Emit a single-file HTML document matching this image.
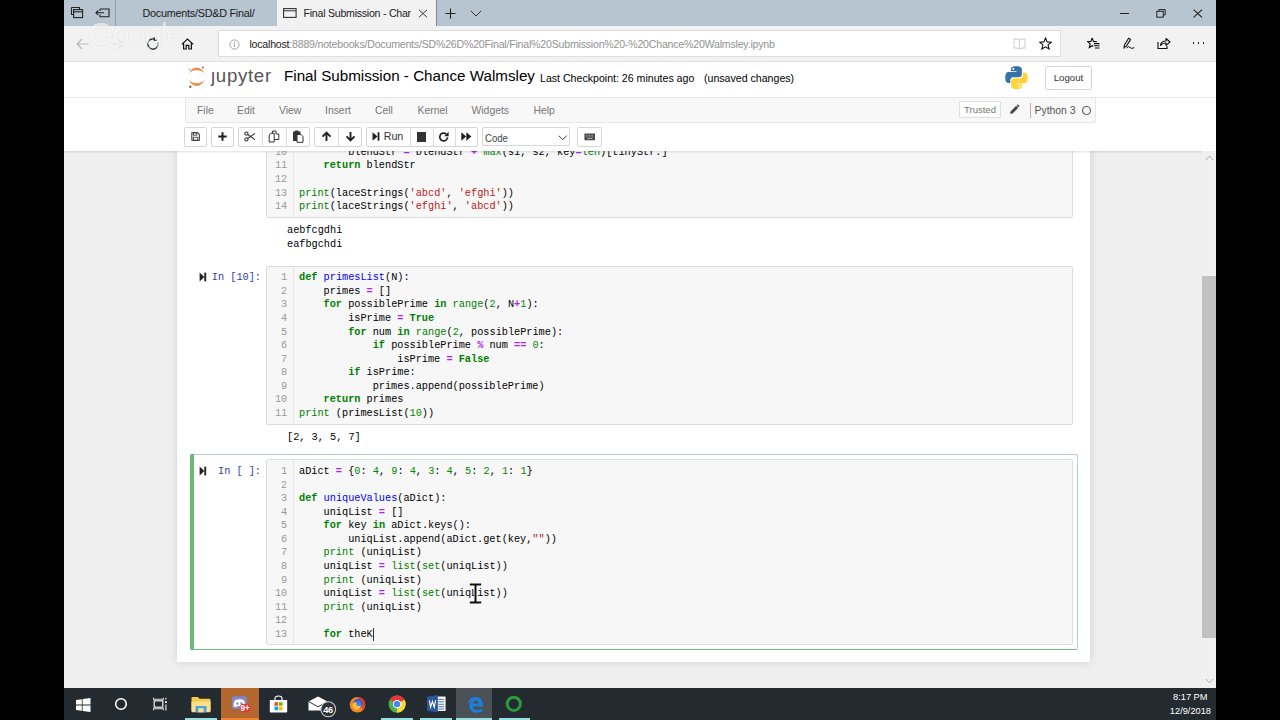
<!DOCTYPE html>
<html lang="en">
<head>
<meta charset="utf-8">
<title>Final Submission - Chance Walmsley</title>
<style>
*{box-sizing:border-box;margin:0;padding:0}
html,body{width:1280px;height:720px;overflow:hidden;background:#000}
body{font-family:"Liberation Sans",sans-serif;position:relative;color:#000}
.abs{position:absolute}
#screen{position:absolute;left:64px;top:0;width:1152px;height:720px;overflow:hidden;background:#eeeeee}
/* all children of #screen positioned in page coords by shifting -64 */
#in{position:absolute;left:-64px;top:0;width:1280px;height:720px}
#tabbar{left:64px;top:0;width:1152px;height:25.500px;background:#b7c5d0}
#addr{left:64px;top:25.500px;width:1152px;height:36.500px;background:#f2f2f2;border-bottom:1px solid #e0e0e0}
#urlbox{left:218px;top:30px;width:843.400px;height:26.600px;background:#fff;border:1px solid #dedede}
.tabtxt{font-size:10.6px;color:#1a1a1a;white-space:nowrap;line-height:12px}
#jhead{left:64px;top:62px;width:1152px;height:89px;background:#fff;box-shadow:0 1px 2px rgba(0,0,0,.12)}
#nbbg{left:64px;top:151px;width:1138px;height:537px;background:#efefef}
#nb{left:177px;top:140px;width:913px;height:522px;background:#fff;box-shadow:0 0 8px 0 rgba(87,87,87,.2)}
.menubar{left:185px;top:97px;width:911px;height:26px;background:#f8f8f8;border:1px solid #e7e7e7;border-radius:2px}
.mi{position:absolute;top:104.600px;font-size:10.4px;color:#777;line-height:12px;white-space:nowrap}
.btn{position:absolute;top:127px;height:20px;background:#fff;border:1px solid #d6d6d6;border-radius:2px}
.code{font-family:"Liberation Mono",monospace;font-size:10.25px;line-height:13.6px;white-space:pre;color:#000;letter-spacing:-0.01px}
.inarea{position:absolute;background:#f7f7f7;border:1px solid #dcdcdc;border-radius:2px;overflow:hidden}
.gut{position:absolute;left:0;top:0;bottom:0;width:27px;border-right:1px solid #e6e6e6;background:#f7f7f7}
.ln{position:absolute;left:0;width:20.200px;text-align:right;color:#999}
.cl{position:absolute;left:32px}
.k{color:#008000;font-weight:bold}
.b{color:#008000}
.n{color:#008800}
.f{color:#0000ff}
.o{color:#aa22ff;font-weight:bold}
.s{color:#ba2121}
.prompt{position:absolute;color:#303f9f;text-align:right}
#taskbar{left:64px;top:688px;width:1152px;height:32px;background:#232a30}
</style>
</head>
<body>
<div id="screen"><div id="in">

<!-- NOTEBOOK AREA -->
<div class="abs" id="nbbg"></div>
<div class="abs" id="nb"></div>
<!--CELLS-START-->
<div class="inarea code" style="left:266px;top:130px;width:807px;height:87.5px">
<div class="gut"></div>
<div class="ln" style="top:14.90px">10</div><div class="cl" style="top:14.90px">        blendStr <span class="o">=</span> blendStr <span class="o">+</span> <span class="b">max</span>(s1, s2, key<span class="o">=</span><span class="b">len</span>)[tinyStr:]</div>
<div class="ln" style="top:28.48px">11</div><div class="cl" style="top:28.48px">    <span class="k">return</span> blendStr</div>
<div class="ln" style="top:42.06px">12</div><div class="cl" style="top:42.06px"></div>
<div class="ln" style="top:55.64px">13</div><div class="cl" style="top:55.64px"><span class="b">print</span>(laceStrings(<span class="s">'abcd'</span>, <span class="s">'efghi'</span>))</div>
<div class="ln" style="top:69.22px">14</div><div class="cl" style="top:69.22px"><span class="b">print</span>(laceStrings(<span class="s">'efghi'</span>, <span class="s">'abcd'</span>))</div>

</div>
<div class="code abs" style="left:287px;top:224.3px">aebfcgdhi
eafbgchdi</div>
<div class="prompt code" style="left:190px;top:271.2px;width:71px">In [10]:</div>
<div class="inarea code" style="left:266px;top:265.5px;width:807px;height:159.5px">
<div class="gut"></div>
<div class="ln" style="top:4.70px">1</div><div class="cl" style="top:4.70px"><span class="k">def</span> <span class="f">primesList</span>(N):</div>
<div class="ln" style="top:18.28px">2</div><div class="cl" style="top:18.28px">    primes <span class="o">=</span> []</div>
<div class="ln" style="top:31.86px">3</div><div class="cl" style="top:31.86px">    <span class="k">for</span> possiblePrime <span class="k">in</span> <span class="b">range</span>(<span class="n">2</span>, N<span class="o">+</span><span class="n">1</span>):</div>
<div class="ln" style="top:45.44px">4</div><div class="cl" style="top:45.44px">        isPrime <span class="o">=</span> <span class="k">True</span></div>
<div class="ln" style="top:59.02px">5</div><div class="cl" style="top:59.02px">        <span class="k">for</span> num <span class="k">in</span> <span class="b">range</span>(<span class="n">2</span>, possiblePrime):</div>
<div class="ln" style="top:72.60px">6</div><div class="cl" style="top:72.60px">            <span class="k">if</span> possiblePrime <span class="o">%</span> num <span class="o">==</span> <span class="n">0</span>:</div>
<div class="ln" style="top:86.18px">7</div><div class="cl" style="top:86.18px">                isPrime <span class="o">=</span> <span class="k">False</span></div>
<div class="ln" style="top:99.76px">8</div><div class="cl" style="top:99.76px">        <span class="k">if</span> isPrime:</div>
<div class="ln" style="top:113.34px">9</div><div class="cl" style="top:113.34px">            primes.append(possiblePrime)</div>
<div class="ln" style="top:126.92px">10</div><div class="cl" style="top:126.92px">    <span class="k">return</span> primes</div>
<div class="ln" style="top:140.50px">11</div><div class="cl" style="top:140.50px"><span class="b">print</span> (primesList(<span class="n">10</span>))</div>

</div>
<div class="code abs" style="left:287px;top:430.7px">[2, 3, 5, 7]</div>
<div class="abs" style="left:190px;top:454px;width:888px;height:196px;border:1px solid #b3d6b8;border-bottom-color:#74bb80;border-radius:2px;background:#fff"></div><div class="abs" style="left:190px;top:454px;width:4px;height:196px;background:#69b977;border-radius:2px 0 0 2px"></div>
<div class="prompt code" style="left:190px;top:465.0px;width:71px">In [ ]:</div>
<div class="inarea code" style="left:266px;top:458.5px;width:807px;height:186.5px">
<div class="gut"></div>
<div class="ln" style="top:5.50px">1</div><div class="cl" style="top:5.50px">aDict <span class="o">=</span> {<span class="n">0</span>: <span class="n">4</span>, <span class="n">9</span>: <span class="n">4</span>, <span class="n">3</span>: <span class="n">4</span>, <span class="n">5</span>: <span class="n">2</span>, <span class="n">1</span>: <span class="n">1</span>}</div>
<div class="ln" style="top:19.08px">2</div><div class="cl" style="top:19.08px"></div>
<div class="ln" style="top:32.66px">3</div><div class="cl" style="top:32.66px"><span class="k">def</span> <span class="f">uniqueValues</span>(aDict):</div>
<div class="ln" style="top:46.24px">4</div><div class="cl" style="top:46.24px">    uniqList <span class="o">=</span> []</div>
<div class="ln" style="top:59.82px">5</div><div class="cl" style="top:59.82px">    <span class="k">for</span> key <span class="k">in</span> aDict.keys():</div>
<div class="ln" style="top:73.40px">6</div><div class="cl" style="top:73.40px">        uniqList.append(aDict.get(key,<span class="s">""</span>))</div>
<div class="ln" style="top:86.98px">7</div><div class="cl" style="top:86.98px">    <span class="b">print</span> (uniqList)</div>
<div class="ln" style="top:100.56px">8</div><div class="cl" style="top:100.56px">    uniqList <span class="o">=</span> <span class="b">list</span>(<span class="b">set</span>(uniqList))</div>
<div class="ln" style="top:114.14px">9</div><div class="cl" style="top:114.14px">    <span class="b">print</span> (uniqList)</div>
<div class="ln" style="top:127.72px">10</div><div class="cl" style="top:127.72px">    uniqList <span class="o">=</span> <span class="b">list</span>(<span class="b">set</span>(uniqList))</div>
<div class="ln" style="top:141.30px">11</div><div class="cl" style="top:141.30px">    <span class="b">print</span> (uniqList)</div>
<div class="ln" style="top:154.88px">12</div><div class="cl" style="top:154.88px"></div>
<div class="ln" style="top:168.46px">13</div><div class="cl" style="top:168.46px">    <span class="k">for</span> theK</div>
<div style="position:absolute;left:105.9px;top:168.46px;width:1px;height:13px;background:#333"></div>
</div>
<svg class="abs" style="left:199px;top:271.800px" width="8" height="10" viewBox="0 0 8 10"><path d="M.6 .6 L5.400 5 L.6 9.400 Z" fill="#222"/><rect x="5.300" y=".6" width="1.900" height="8.800" fill="#222"/></svg>
<svg class="abs" style="left:199px;top:465.500px" width="8" height="10" viewBox="0 0 8 10"><path d="M.6 .6 L5.400 5 L.6 9.400 Z" fill="#222"/><rect x="5.300" y=".6" width="1.900" height="8.800" fill="#222"/></svg>
<svg class="abs" style="left:469px;top:582.500px" width="13" height="21" viewBox="0 0 13 21"><path d="M.8 1.500 H5.200 Q6.500 1.500 6.500 2.500 Q6.500 1.500 7.800 1.500 H12.200 M.8 19.500 H5.200 Q6.500 19.500 6.500 18.500 Q6.500 19.500 7.800 19.500 H12.200 M6.500 2 V19" fill="none" stroke="#fff" stroke-width="3.200" stroke-opacity=".85"/><path d="M.8 1.500 H12.200 M.8 19.500 H12.200 M6.500 1.500 V19.500" fill="none" stroke="#111" stroke-width="2"/></svg>
<!--CELLS-END-->

<!-- JUPYTER HEADER -->
<div class="abs" id="jhead"></div>
<!--HEADER-START-->
<!-- jupyter logo -->
<svg class="abs" style="left:186px;top:64px" width="22" height="27" viewBox="0 0 22 27">
  <path d="M3.000 9.000 C4.800 5.000 7.800 3.700 10.600 3.700 C13.400 3.700 16.400 5.000 18.200 9.000 C16.000 6.900 13.500 6.300 10.600 6.300 C7.700 6.300 5.200 6.900 3.000 9.000 Z" fill="#ee8a4a"/>
  <path d="M3.000 16.000 C4.800 20.300 7.800 21.900 10.600 21.900 C13.400 21.900 16.400 20.300 18.200 16.000 C16.000 18.400 13.500 19.200 10.600 19.200 C7.700 19.200 5.200 18.400 3.000 16.000 Z" fill="#ee8a4a"/>
  <circle cx="16.900" cy="3.400" r="1.000" fill="#767677"/>
  <circle cx="3.100" cy="5.300" r="0.700" fill="#989798"/>
  <circle cx="4.300" cy="22.800" r="1.200" fill="#6f7070"/>
</svg>
<div class="abs" style="left:211px;top:64.1px;font-size:18.7px;line-height:24px;color:#555;letter-spacing:.68px;white-space:nowrap">ȷupyter</div>
<div class="abs" style="left:284px;top:65.4px;font-size:15.2px;line-height:22px;color:#000;white-space:nowrap">Final Submission - Chance Walmsley</div>
<div class="abs" style="left:540px;top:71.3px;font-size:10.6px;line-height:14px;color:#000;white-space:nowrap">Last Checkpoint: 26 minutes ago</div>
<div class="abs" style="left:704px;top:71.3px;font-size:10.6px;line-height:14px;color:#000;white-space:nowrap">(unsaved changes)</div>
<!-- python logo -->
<svg class="abs" style="left:1004.5px;top:65.5px" width="23" height="23.5" viewBox="0 0 110 112">
  <path d="M54.3 1C27 1 28.7 12.9 28.7 12.9l.03 12.3h26.1v3.7H18.4S1 26.9 1 54.6c0 27.700 15.200 26.700 15.200 26.700h9.100V68.500s-.5-15.200 15-15.200h25.800s14.500.2 14.500-14V15.700S82.800 1 54.300 1zM39.900 9.300c2.600 0 4.700 2.100 4.700 4.700s-2.100 4.700-4.700 4.700-4.700-2.100-4.700-4.700 2.100-4.700 4.700-4.700z" fill="#3572a5"/>
  <path d="M55.700 111c27.300 0 25.600-11.900 25.600-11.900l-.03-12.300H55.200v-3.700h36.400S109 85.100 109 57.400c0-27.700-15.200-26.700-15.200-26.700h-9.100v12.800s.5 15.200-15 15.200H43.900s-14.500-.2-14.500 14v23.600S27.200 111 55.700 111zm14.400-8.300c-2.600 0-4.700-2.100-4.700-4.700s2.100-4.700 4.700-4.700 4.700 2.100 4.700 4.700-2.100 4.700-4.700 4.700z" fill="#ffd43b"/>
</svg>
<div class="abs" style="left:1045px;top:65.5px;width:47px;height:24px;border:1px solid #d6d6d6;border-radius:2px;background:#fff;font-size:9.700px;line-height:22.500px;text-align:center;color:#333">Logout</div>
<!-- header bar line -->
<div class="abs" style="left:64px;top:97px;width:1152px;height:1px;background:#ebebeb"></div>
<!-- menubar -->
<div class="abs menubar"></div>
<div class="mi" style="left:197px">File</div>
<div class="mi" style="left:237px">Edit</div>
<div class="mi" style="left:279px">View</div>
<div class="mi" style="left:325px">Insert</div>
<div class="mi" style="left:375px">Cell</div>
<div class="mi" style="left:417.5px">Kernel</div>
<div class="mi" style="left:471.5px">Widgets</div>
<div class="mi" style="left:533.5px">Help</div>
<div class="abs" style="left:959px;top:101px;width:42px;height:17px;border:1px solid #e0e0e0;background:#fff;border-radius:1px;font-size:9.500px;line-height:15.500px;text-align:center;color:#777">Trusted</div>
<svg class="abs" style="left:1009px;top:104px" width="11" height="11" viewBox="0 0 11 11"><path d="M1.2 9.8 L1.6 7.4 L7.2 1.8 L9.2 3.8 L3.6 9.4 Z M7.8 1.2 L8.4 .6 Q8.9 .3 9.4 .8 L10.2 1.6 Q10.6 2.1 10.2 2.6 L9.700 3.200 Z" fill="#444"/></svg>
<div class="abs" style="left:1029.500px;top:103px;width:1px;height:14.500px;background:#b0b0b0"></div>
<div class="abs" style="left:1034.5px;top:105px;font-size:10.4px;line-height:12px;color:#555;white-space:nowrap">Python 3</div>
<svg class="abs" style="left:1081px;top:104.700px" width="11" height="11" viewBox="0 0 11 11"><circle cx="5.500" cy="5.500" r="4" fill="none" stroke="#666" stroke-width="1.200"/></svg>
<!-- toolbar -->
<div class="btn" style="left:184px;width:23px"></div>
<div class="btn" style="left:211px;width:23px"></div>
<div class="btn" style="left:238px;width:72px"></div>
<div class="abs" style="left:261.500px;top:128px;width:1px;height:18px;background:#ddd"></div>
<div class="abs" style="left:285.500px;top:128px;width:1px;height:18px;background:#ddd"></div>
<div class="btn" style="left:314px;width:48px"></div>
<div class="abs" style="left:337.500px;top:128px;width:1px;height:18px;background:#ddd"></div>
<div class="btn" style="left:366px;width:112px"></div>
<div class="abs" style="left:409.500px;top:128px;width:1px;height:18px;background:#ddd"></div>
<div class="abs" style="left:432.500px;top:128px;width:1px;height:18px;background:#ddd"></div>
<div class="abs" style="left:454.500px;top:128px;width:1px;height:18px;background:#ddd"></div>
<div class="btn" style="left:482px;width:88px;top:127.200px;height:18.600px"></div>
<div class="btn" style="left:577px;width:25px"></div>
<!-- toolbar icons -->
<!-- save -->
<svg class="abs" style="left:191px;top:132px" width="9.200" height="9.200" viewBox="0 0 11 11"><path d="M1 1 H8.200 L10 2.800 V10 H1 Z" fill="none" stroke="#333" stroke-width="1.200"/><rect x="2.800" y="1" width="4.200" height="2.800" fill="none" stroke="#333" stroke-width="1"/><rect x="2.800" y="6.300" width="5.400" height="3.700" fill="none" stroke="#333" stroke-width="1"/></svg>
<!-- plus -->
<svg class="abs" style="left:218px;top:132px" width="9" height="9" viewBox="0 0 9 9"><path d="M4.500 .3 V8.700 M.3 4.500 H8.700" stroke="#222" stroke-width="2" fill="none"/></svg>
<!-- cut -->
<svg class="abs" style="left:244px;top:131px" width="12" height="11" viewBox="0 0 12 11"><circle cx="2.400" cy="2.600" r="1.600" fill="none" stroke="#333" stroke-width="1.100"/><circle cx="2.400" cy="8.400" r="1.600" fill="none" stroke="#333" stroke-width="1.100"/><path d="M3.700 3.500 L11 8.600 M3.700 7.500 L11 2.400" stroke="#333" stroke-width="1.100" fill="none"/></svg>
<!-- copy -->
<svg class="abs" style="left:268px;top:130px" width="12" height="13" viewBox="0 0 12 13"><path d="M4.500 1 H8 V4 H10.800 V9.500 H4.500 Z" fill="#fff" stroke="#333" stroke-width="1"/><path d="M1.200 4.800 L3 3.200 H6.200 V12 H1.200 Z" fill="#fff" stroke="#333" stroke-width="1"/></svg>
<!-- paste -->
<svg class="abs" style="left:292px;top:130px" width="12" height="13" viewBox="0 0 12 13"><rect x="1" y="1.500" width="7.500" height="9.500" fill="#333"/><rect x="3" y=".5" width="3.500" height="2" fill="#333"/><path d="M5 4.500 H9 L11 6.500 V12.300 H5 Z" fill="#fff" stroke="#333" stroke-width="1"/></svg>
<!-- up -->
<svg class="abs" style="left:320.500px;top:131px" width="11" height="11" viewBox="0 0 11 11"><path d="M5.500 10 V2 M1.500 5.600 L5.500 1.500 L9.500 5.600" stroke="#222" stroke-width="1.900" fill="none"/></svg>
<!-- down -->
<svg class="abs" style="left:344.500px;top:131px" width="11" height="11" viewBox="0 0 11 11"><path d="M5.500 1 V9 M1.500 5.400 L5.500 9.500 L9.500 5.400" stroke="#222" stroke-width="1.900" fill="none"/></svg>
<!-- run -->
<svg class="abs" style="left:372px;top:132px" width="8" height="9" viewBox="0 0 8 9"><path d="M.5 .3 L5.500 4.500 L.5 8.700 Z" fill="#222"/><rect x="5.600" y=".3" width="1.800" height="8.400" fill="#222"/></svg>
<div class="abs" style="left:383.700px;top:130.200px;font-size:10.700px;line-height:12px;color:#333;white-space:nowrap">Run</div>
<!-- stop -->
<div class="abs" style="left:416.500px;top:132px;width:9.500px;height:9.500px;background:#333"></div>
<!-- restart -->
<svg class="abs" style="left:437.500px;top:130.500px" width="12" height="12" viewBox="0 0 12 12"><path d="M9.600 6.200 A3.900 3.900 0 1 1 8.200 3" fill="none" stroke="#222" stroke-width="1.700"/><path d="M10.600 .8 V5.200 H6.200 Z" fill="#222"/></svg>
<!-- fast forward -->
<svg class="abs" style="left:460.500px;top:132px" width="11" height="9" viewBox="0 0 11 9"><path d="M.3 .2 L5.200 4.500 L.3 8.800 Z M5.300 .2 L10.400 4.500 L5.300 8.800 Z" fill="#222"/></svg>
<!-- select -->
<div class="abs" style="left:484.800px;top:132px;font-size:11.300px;line-height:13px;color:#444;white-space:nowrap;transform:scaleX(.85);transform-origin:0 50%">Code</div>
<svg class="abs" style="left:557.500px;top:135.200px" width="9.500" height="5.700" viewBox="0 0 10 6"><path d="M.8 .8 L5 4.800 L9.200 .8" stroke="#333" stroke-width="1" fill="none"/></svg>
<!-- keyboard -->
<svg class="abs" style="left:583.700px;top:132.700px" width="11.700" height="8.100" viewBox="0 0 13 9"><rect x=".5" y=".5" width="12" height="7.600" rx="1" fill="#444"/><path d="M2 2.500 H11 M2 4.300 H11" stroke="#ddd" stroke-width=".8" stroke-dasharray="1 .8"/><path d="M3.500 6.200 H9.500" stroke="#ddd" stroke-width=".8"/></svg>

<!--HEADER-END-->

<!-- BROWSER CHROME -->
<div class="abs" id="tabbar"></div>
<div class="abs" id="addr"></div>
<div class="abs" id="urlbox"></div>
<!--CHROME-START-->
<!-- tab bar -->
<svg class="abs" style="left:70px;top:6px" width="14" height="13" viewBox="0 0 14 13"><path d="M1.500 1.500 H9.500 V3.500 M1.500 1.500 V8.500 H3.500" fill="none" stroke="#222" stroke-width="1.100"/><rect x="3.600" y="3.600" width="9" height="8" fill="none" stroke="#222" stroke-width="1.100"/><path d="M3.600 5.800 H12.600" stroke="#222" stroke-width="1.100"/></svg>
<svg class="abs" style="left:95px;top:8px" width="15" height="10" viewBox="0 0 15 10"><path d="M5 1 H14 V8.700 H5 V6.500 M5 1 V3" fill="none" stroke="#222" stroke-width="1.100"/><path d="M1 4.800 H9 M3.300 2.500 L1 4.800 L3.300 7.100" fill="none" stroke="#222" stroke-width="1.100"/></svg>
<div class="abs" style="left:115px;top:0;width:1px;height:25.500px;background:#8f9da8"></div>
<div class="abs tabtxt" style="left:142.500px;top:6.900px;font-size:10.800px;letter-spacing:-.24px">Documents/SD&amp;D Final/</div>
<div class="abs" style="left:276.500px;top:0;width:159.500px;height:25.500px;background:#f2f2f2"></div>
<div class="abs" style="left:436px;top:0;width:1px;height:25.500px;background:#7d8a94"></div>
<svg class="abs" style="left:283px;top:8px" width="14" height="10" viewBox="0 0 14 10"><rect x=".6" y=".6" width="12.500" height="8.800" fill="none" stroke="#333" stroke-width="1.100"/><path d="M.6 2.800 H13" stroke="#333" stroke-width="1"/></svg>
<div class="abs tabtxt" style="left:303.500px;top:6.900px;font-size:10.600px;letter-spacing:-.245px">Final Submission - Char</div>
<svg class="abs" style="left:418px;top:9px" width="10" height="9" viewBox="0 0 10 9"><path d="M1 .8 L9 8.200 M9 .8 L1 8.200" stroke="#333" stroke-width="1" fill="none"/></svg>
<svg class="abs" style="left:444.500px;top:7.500px" width="11" height="11" viewBox="0 0 11 11"><path d="M5.500 .5 V10.500 M.5 5.500 H10.500" stroke="#222" stroke-width="1.100" fill="none"/></svg>
<svg class="abs" style="left:469.500px;top:9.500px" width="12" height="7" viewBox="0 0 12 7"><path d="M.8 .8 L6 6 L11.200 .8" stroke="#333" stroke-width="1" fill="none"/></svg>
<!-- window controls -->
<div class="abs" style="left:1120px;top:12.700px;width:8.500px;height:1px;background:#222"></div>
<svg class="abs" style="left:1156px;top:9px" width="10" height="9" viewBox="0 0 10 9"><path d="M2.800 2.200 V.6 H9.200 V6 H7.400" fill="none" stroke="#222" stroke-width="1"/><rect x=".8" y="2.300" width="6.500" height="5.900" fill="none" stroke="#222" stroke-width="1"/></svg>
<svg class="abs" style="left:1193px;top:9px" width="10" height="9" viewBox="0 0 10 9"><path d="M.6 .6 L9 8.400 M9 .6 L.6 8.400" stroke="#222" stroke-width="1.100" fill="none"/></svg>
<!-- nav icons -->
<svg class="abs" style="left:76px;top:38px" width="13" height="12" viewBox="0 0 13 12"><path d="M12.500 6 H1.200 M6 1 L1 6 L6 11" fill="none" stroke="#b5b5b5" stroke-width="1.100"/></svg>
<svg class="abs" style="left:111px;top:38px" width="13" height="12" viewBox="0 0 13 12"><path d="M.5 6 H11.800 M7 1 L12 6 L7 11" fill="none" stroke="#e2e2e2" stroke-width="1.100"/></svg>
<svg class="abs" style="left:145.500px;top:36.500px" width="14" height="14" viewBox="0 0 14 14"><path d="M8.700 2.100 A5.200 5.200 0 1 0 11.900 5.200" fill="none" stroke="#222" stroke-width="1.300"/><path d="M8.200 .3 V3.200 H11.200" fill="none" stroke="#222" stroke-width="1.100"/></svg>
<svg class="abs" style="left:181px;top:37.500px" width="13" height="12" viewBox="0 0 13 12"><path d="M.8 6.400 L6.500 1 L12.200 6.400 M2.600 5 V11 H5.200 V7.400 H7.800 V11 H10.400 V5" fill="none" stroke="#111" stroke-width="1.200"/></svg>
<!-- url -->
<svg class="abs" style="left:229px;top:38.500px" width="11" height="11" viewBox="0 0 11 11"><circle cx="5.500" cy="5.500" r="4.600" fill="none" stroke="#999" stroke-width=".9"/><path d="M5.500 4.600 V8 M5.500 2.800 V3.800" stroke="#999" stroke-width="1"/></svg>
<div class="abs" style="left:249.400px;top:37.500px;font-size:10.600px;letter-spacing:-.21px;line-height:12px;color:#929292;white-space:nowrap"><span style="color:#1a1a1a">localhost</span>:8889/notebooks/Documents/SD%26D%20Final/Final%20Submission%20-%20Chance%20Walmsley.ipynb</div>
<!-- reading view (dim) -->
<svg class="abs" style="left:1013px;top:37.500px" width="13" height="12" viewBox="0 0 13 12"><path d="M6.500 2 V11 M6.500 2 Q4 .6 1 1 V10 Q4 9.600 6.500 11 Q9 9.600 12 10 V1 Q9 .6 6.500 2" fill="none" stroke="#d2d2d2" stroke-width="1.100"/></svg>
<!-- star -->
<svg class="abs" style="left:1038.500px;top:37px" width="13" height="13" viewBox="0 0 13 13"><path d="M6.500 1 L8.100 4.900 L12.200 5.200 L9.100 7.900 L10.100 12 L6.500 9.800 L2.900 12 L3.900 7.900 L.8 5.200 L4.900 4.900 Z" fill="none" stroke="#111" stroke-width="1.100" stroke-linejoin="miter"/></svg>
<!-- favorites list -->
<svg class="abs" style="left:1087px;top:37px" width="13" height="13" viewBox="0 0 13 13"><path d="M5.200 1 L6.500 4.400 L9.800 4.600 M5.200 1 L3.900 4.400 L.6 4.600 L3.200 6.900 L2.300 10.500 L5.200 8.700 L6.200 9.300" fill="none" stroke="#111" stroke-width="1.100"/><path d="M7 6.600 H12.500 M7 8.800 H12.500 M8 11 H12.500" stroke="#111" stroke-width="1.100"/></svg>
<!-- pen -->
<svg class="abs" style="left:1122px;top:37px" width="13" height="13" viewBox="0 0 13 13"><path d="M2 10.500 L2.600 7.600 L6.600 1.200 L8.600 2.400 L4.600 8.900 Z M2 10.500 L2.200 11.500" fill="none" stroke="#111" stroke-width="1.100"/><path d="M4.500 11 Q6.500 8.500 8 10.500 Q9.500 12.200 12.300 10.700" fill="none" stroke="#111" stroke-width="1"/></svg>
<!-- share -->
<svg class="abs" style="left:1156.500px;top:37px" width="14" height="13" viewBox="0 0 14 13"><path d="M1 5 V11.500 H10 V9" fill="none" stroke="#111" stroke-width="1.100"/><path d="M3.500 8.500 Q4 4 9 4 V1.500 L13 5 L9 8.300 V6 Q5.500 5.800 3.500 8.500 Z" fill="none" stroke="#111" stroke-width="1.100" stroke-linejoin="round"/></svg>
<!-- dots -->
<div class="abs" style="left:1192.500px;top:42px;width:1.700px;height:1.700px;background:#222;box-shadow:5px 0 0 #222,10px 0 0 #222"></div>
<!-- watermark -->
<div class="abs" style="left:88.500px;top:15.500px;font-size:32px;line-height:36px;color:rgba(255,255,255,.62);text-shadow:0 0 2px rgba(130,130,130,.15);white-space:nowrap;letter-spacing:-1.500px">Google</div>

<!--CHROME-END-->

<!-- SCROLLBAR -->
<!--SCROLL-START-->
<div class="abs" style="left:1202px;top:151px;width:14px;height:537px;background:#f0f0f0"></div>
<div class="abs" style="left:1202px;top:276px;width:14px;height:362px;background:#c1c1c1"></div>
<svg class="abs" style="left:1204.500px;top:154.500px" width="9" height="6" viewBox="0 0 9 6"><path d="M.8 5 L4.500 1.200 L8.200 5" fill="none" stroke="#aaa" stroke-width="1"/></svg>
<svg class="abs" style="left:1204.500px;top:678px" width="9" height="6" viewBox="0 0 9 6"><path d="M.8 1 L4.500 4.800 L8.200 1" fill="none" stroke="#aaa" stroke-width="1"/></svg>

<!--SCROLL-END-->

<!-- TASKBAR -->
<div class="abs" id="taskbar"></div>
<!--TASK-START-->
<!-- windows logo -->
<svg class="abs" style="left:76px;top:697.500px" width="14.500" height="14" viewBox="0 0 14.500 14"><path d="M0 2 L5.800 1.200 V6.600 H0 Z M6.600 1.100 L14.500 0 V6.600 H6.600 Z M0 7.400 H5.800 V12.800 L0 12 Z M6.600 7.400 H14.500 V14 L6.600 12.900 Z" fill="#fff"/></svg>
<!-- cortana -->
<svg class="abs" style="left:114px;top:697.400px" width="14" height="14" viewBox="0 0 14 14"><circle cx="7" cy="7" r="5.300" fill="none" stroke="#fff" stroke-width="1.600"/></svg>
<!-- task view -->
<svg class="abs" style="left:152.500px;top:696.500px" width="15" height="14" viewBox="0 0 15 14"><rect x="1.200" y="3.800" width="8.600" height="6.400" fill="none" stroke="#e4e4e4" stroke-width="1.300"/><path d="M.6 .8 V2.300 H10.400 V.8 M.6 13.200 V11.700 H10.400 V13.200" fill="none" stroke="#e4e4e4" stroke-width="1.100"/><path d="M12.900 7.500 V13.400 M12.900 .8 V2.600" stroke="#e4e4e4" stroke-width="1.200"/><rect x="12" y="4.200" width="1.800" height="1.800" fill="#fff"/></svg>
<!-- explorer -->
<svg class="abs" style="left:191px;top:695.500px" width="20" height="17" viewBox="0 0 20 17"><path d="M.5 2 Q.5 1 1.500 1 H7 L8.500 2.800 H18.500 Q19.500 2.800 19.500 3.800 V15 H.5 Z" fill="#f6c84c"/><path d="M.5 5.500 H19.500 V15.500 Q19.500 16.300 18.700 16.300 H1.300 Q.5 16.300 .5 15.500 Z" fill="#fbe08a"/><rect x="4.500" y="10" width="11" height="6.300" fill="#4aa3df"/><rect x="7.300" y="12.200" width="5.400" height="4.100" fill="#fbe08a"/></svg>
<div class="abs" style="left:185px;top:718px;width:32px;height:2px;background:#98dfe0"></div>
<!-- orange highlighted app -->
<div class="abs" style="left:220.800px;top:688px;width:38.200px;height:32px;background:#b3672f"></div>
<div class="abs" style="left:220.800px;top:718px;width:38.200px;height:2px;background:#f0812e"></div>
<svg class="abs" style="left:231px;top:696px" width="21" height="17" viewBox="0 0 21 17"><rect x=".9" y=".3" width="15" height="12.700" rx="2.200" fill="#7d88cf"/><path d="M4.200 4 Q8.400 2.700 12.600 4 Q14.600 6.800 14.300 10.200 Q12.800 11.300 11.600 11.300 L11 10.300 H5.800 L5.200 11.300 Q4 11.300 2.500 10.200 Q2.200 6.800 4.200 4 Z" fill="#fff"/><ellipse cx="6.400" cy="7.600" rx="1.100" ry="1.300" fill="#7d88cf"/><ellipse cx="10.400" cy="7.600" rx="1.100" ry="1.300" fill="#7d88cf"/><rect x="8.400" y="7.700" width="11.400" height="8.600" rx="4.200" fill="#e03a3a"/></svg>
<div class="abs" style="left:240.600px;top:703.600px;font-size:8.200px;line-height:9px;font-weight:bold;color:#fff;white-space:nowrap;letter-spacing:-.2px">9+</div>
<!-- store -->
<svg class="abs" style="left:269px;top:694.500px" width="19" height="18" viewBox="0 0 19 18"><path d="M6 5 V3.500 Q6 1 9.500 1 Q13 1 13 3.500 V5" fill="none" stroke="#fff" stroke-width="1.200"/><path d="M.8 5 H18.200 V16.500 Q18.200 17.400 17.300 17.400 H1.700 Q.8 17.400 .8 16.500 Z" fill="#fff"/><rect x="5.500" y="7.200" width="3.600" height="3.600" fill="#f25022"/><rect x="9.900" y="7.200" width="3.600" height="3.600" fill="#7fba00"/><rect x="5.500" y="11.600" width="3.600" height="3.600" fill="#00a4ef"/><rect x="9.900" y="11.600" width="3.600" height="3.600" fill="#ffb900"/></svg>
<!-- mail -->
<svg class="abs" style="left:308px;top:695.500px" width="20" height="15" viewBox="0 0 20 15"><path d="M.5 5.500 L10 .5 L19.500 5.500 V14.500 H.5 Z" fill="#fff"/><path d="M.5 5.500 L10 10.800 L19.500 5.500" fill="none" stroke="#262d33" stroke-width="1"/></svg>
<svg class="abs" style="left:320.200px;top:701.200px" width="16.500" height="16.500" viewBox="0 0 14 14"><circle cx="7" cy="7" r="6.300" fill="#2b3238" stroke="#cfd3d6" stroke-width=".9"/></svg>
<div class="abs" style="left:323.200px;top:704.700px;font-size:9.200px;line-height:10px;font-weight:bold;color:#fff;white-space:nowrap;letter-spacing:-.2px">46</div>
<!-- firefox -->
<svg class="abs" style="left:349px;top:695.500px" width="17" height="17" viewBox="0 0 17 17"><circle cx="8.500" cy="8.700" r="7.800" fill="#f5871f"/><path d="M8.500 1 Q14 1 15.800 6 Q16.800 12 12 15.300 Q15 10 12 6.500 Q10.500 4.500 8.500 1 Z" fill="#e3342a"/><circle cx="8.800" cy="7.800" r="4.800" fill="#2f62d6"/><path d="M3.500 8 Q5 5.500 8.500 6.200 Q11.500 7 11.800 9.800 Q11 13.500 7.500 13.800 Q3.500 13 3.500 8 Z" fill="#ffbf3d"/><circle cx="9.800" cy="7.400" r="2.500" fill="#3f7cf0"/></svg>
<!-- chrome -->
<svg class="abs" style="left:387.500px;top:695px" width="18.200" height="18.200" viewBox="0 0 17 17"><circle cx="8.500" cy="8.500" r="8" fill="#4caf50"/><path d="M8.500 8.500 L1.570 4.500 A8 8 0 0 1 15.430 4.500 Z" fill="#e53935"/><path d="M8.500 8.500 L15.430 4.500 A8 8 0 0 1 8.500 16.500 Z" fill="#fdd835"/><circle cx="8.500" cy="8.500" r="3.900" fill="#fff"/><circle cx="8.500" cy="8.500" r="3" fill="#4285f4"/></svg>
<div class="abs" style="left:381px;top:718px;width:32px;height:2px;background:#98dfe0"></div>
<!-- word -->
<svg class="abs" style="left:426.800px;top:695.300px" width="19" height="17.500" viewBox="0 0 21 17" preserveAspectRatio="none"><rect x="10" y="1.500" width="10.500" height="14" fill="#fff"/><path d="M12.500 4.200 H19 M12.500 6.600 H19 M12.500 9 H19 M12.500 11.400 H19 M12.500 13.600 H19" stroke="#2b579a" stroke-width=".9"/><path d="M0 1.800 L12 0 V17 L0 15.200 Z" fill="#2b579a"/><path d="M2.500 5.200 L4 11.800 L6 6.200 L8 11.800 L9.500 5.200" fill="none" stroke="#fff" stroke-width="1.300"/></svg>
<div class="abs" style="left:420px;top:718px;width:32px;height:2px;background:#98dfe0"></div>
<!-- edge (active) -->
<div class="abs" style="left:456px;top:688px;width:35.500px;height:32px;background:#4a5157"></div>
<div class="abs" style="left:456px;top:718px;width:35.500px;height:2px;background:#98dfe0"></div>
<svg class="abs" style="left:467px;top:695.500px" width="17" height="17" viewBox="0 0 17 17"><path d="M1 8 Q1.500 1 8.800 1 Q15.800 1.500 15.800 9 V10.500 H6 Q6.300 14 10 14 Q13 14 15 12.800 V15.600 Q12.500 16.800 9.500 16.800 Q2.500 16.500 2.200 10 Q2.300 6.500 5.500 4.800 Q3 5 1 8 Z M6 7.500 H11.500 Q11.300 4.600 8.800 4.600 Q6.500 4.600 6 7.500 Z" fill="#1c7fdb"/></svg>
<!-- green circle app -->
<svg class="abs" style="left:505.300px;top:695.200px" width="17.600" height="17.600" viewBox="0 0 17 17"><circle cx="8.500" cy="8.500" r="6.400" fill="none" stroke="#2c9a3c" stroke-width="2.900"/><circle cx="8.500" cy="8.500" r="6.400" fill="none" stroke="#1d6b2a" stroke-width="2.900" stroke-dasharray="2 2.500" stroke-dashoffset="1" pathLength="40" opacity=".0"/></svg>
<div class="abs" style="left:499px;top:718px;width:31px;height:2px;background:#98dfe0"></div>
<!-- clock -->
<div class="abs" style="left:1140px;top:691.500px;width:67.500px;text-align:right;font-size:9.250px;line-height:11px;color:#fff;white-space:nowrap">8:17 PM</div>
<div class="abs" style="left:1140px;top:705.500px;width:71px;text-align:right;font-size:9.250px;line-height:11px;color:#fff;white-space:nowrap">12/9/2018</div>

<!--TASK-END-->

</div></div>
</body>
</html>
